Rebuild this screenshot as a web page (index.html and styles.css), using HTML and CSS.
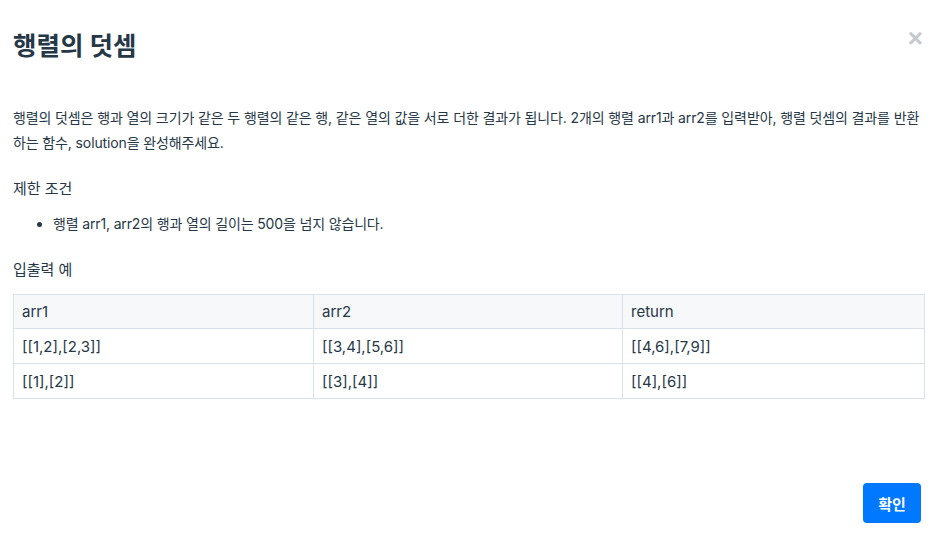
FILE: index.html
```html
<!DOCTYPE html>
<html lang="ko">
<head>
<meta charset="utf-8">
<link rel="stylesheet" href="styles.css">
</head>
<body>
<div class="modal">
  <div class="header">
    <h1 class="title">행렬의 덧셈</h1>
    <span class="close">×</span>
  </div>
  <div class="body">
    <p class="desc">행렬의 덧셈은 행과 열의 크기가 같은 두 행렬의 같은 행, 같은 열의 값을 서로 더한 결과가 됩니다. 2개의 행렬 arr1과 arr2를 입력받아, 행렬 덧셈의 결과를 반환하는 함수, solution을 완성해주세요.</p>
    <h5 class="sub">제한 조건</h5>
    <ul class="list">
      <li>행렬 arr1, arr2의 행과 열의 길이는 500을 넘지 않습니다.</li>
    </ul>
    <h5 class="sub">입출력 예</h5>
    <table class="tbl">
      <thead>
        <tr><th class="c1">arr1</th><th class="c2">arr2</th><th>return</th></tr>
      </thead>
      <tbody>
        <tr><td>[[1,2],[2,3]]</td><td>[[3,4],[5,6]]</td><td>[[4,6],[7,9]]</td></tr>
        <tr><td>[[1],[2]]</td><td>[[3],[4]]</td><td>[[4],[6]]</td></tr>
      </tbody>
    </table>
  </div>
  <div class="footer">
    <button class="btn">확인</button>
  </div>
</div>
</body>
</html>
```
FILE: styles.css
```css
html, body {
  margin: 0;
  padding: 0;
  background: #fff;
}
body {
  font-family: Inter, "Noto Sans CJK KR", sans-serif;
  color: #263747;
}
.modal {
  width: 943px;
  height: 542px;
  display: flex;
  flex-direction: column;
  box-sizing: border-box;
}
.header {
  display: flex;
  justify-content: space-between;
  align-items: flex-start;
  padding: 28px 18px 0 13px;
}
.title {
  margin: 0;
  font-size: 25.5px;
  font-weight: 700;
  line-height: 36px;
  color: #263747;
}
.close {
  font-size: 26px;
  font-weight: 700;
  color: #c4c9cf;
  line-height: 24px;
  margin-top: -2px;
  margin-right: 2px;
  font-family: "Liberation Sans", Arial, sans-serif;
}
.body {
  padding: 0 18px 0 13px;
  flex: 1;
  font-size: 14px;
  color: #263747;
}
.desc {
  margin: 41px 0 0 0;
  line-height: 25px;
  font-size: 14px;
  letter-spacing: -0.12px;
}
.sub {
  margin: 22px 0 0 0;
  font-size: 15px;
  font-weight: 400;
  line-height: 24px;
}
.list {
  margin: 11px 0 0 0;
  padding-left: 40px;
  line-height: 24px;
}
.list li {
  font-size: 14px;
  letter-spacing: -0.15px;
}
.list + .sub {
  margin-top: 22px;
}
.tbl {
  margin-top: 12px;
  width: 912px;
  border-collapse: collapse;
  font-size: 15px;
  color: #263747;
}
.tbl th, .tbl td {
  border: 1px solid #d7e2eb;
  text-align: left;
  font-weight: 400;
  padding: 0 8px;
  height: 33px;
}
.tbl tbody td {
  height: 34px;
}
.tbl thead th {
  background: #f7f8fa;
}
.c1 { width: 283px; }
.c2 { width: 292px; }
.footer {
  display: flex;
  justify-content: flex-end;
  padding: 0 22px 19px 0;
}
.btn {
  width: 58px;
  height: 40px;
  border: none;
  border-radius: 4px;
  background: #0078ff;
  color: #fff;
  font-family: Inter, "Noto Sans CJK KR", sans-serif;
  font-weight: 700;
  font-size: 15px;
  padding: 0;
}
```
